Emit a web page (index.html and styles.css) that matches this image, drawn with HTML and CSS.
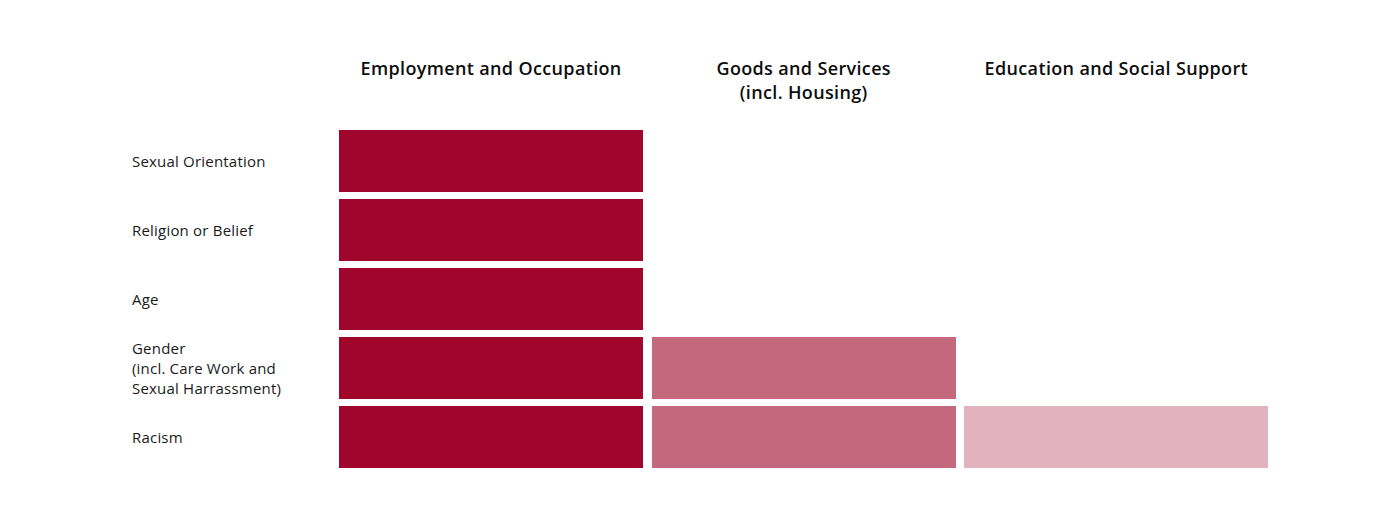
FILE: index.html
```html
<!DOCTYPE html>
<html lang="en">
<head>
<meta charset="utf-8">
<title>Protection Grid</title>
<link rel="stylesheet" href="styles.css">
</head>
<body>
<div class="chart">
  <div class="corner"></div>
  <div class="head">Employment and Occupation</div>
  <div class="head">Goods and Services<br>(incl. Housing)</div>
  <div class="head">Education and Social Support</div>

  <div class="label">Sexual Orientation</div>
  <div class="bar dark"></div>
  <div class="cell"></div>
  <div class="cell"></div>

  <div class="label">Religion or Belief</div>
  <div class="bar dark"></div>
  <div class="cell"></div>
  <div class="cell"></div>

  <div class="label">Age</div>
  <div class="bar dark"></div>
  <div class="cell"></div>
  <div class="cell"></div>

  <div class="label">Gender<br>(incl. Care Work and<br>Sexual Harrassment)</div>
  <div class="bar dark"></div>
  <div class="bar mid"></div>
  <div class="cell"></div>

  <div class="label">Racism</div>
  <div class="bar dark"></div>
  <div class="bar mid"></div>
  <div class="bar light"></div>
</div>
</body>
</html>
```
FILE: styles.css
```css
html, body {
  margin: 0;
  background: #ffffff;
}
body {
  font-family: "Open Sans", "Noto Sans", "Liberation Sans", sans-serif;
  color: #111111;
  font-variant-ligatures: none;
}
.chart {
  display: grid;
  grid-template-columns: 198.7px repeat(3, 304.3px);
  grid-template-rows: 66.5px repeat(5, 61.5px);
  column-gap: 8.3px;
  row-gap: 7.5px;
  padding: 56px 0 0 132px;
}
.head {
  font-size: 18px;
  line-height: 24px;
  font-weight: 600;
  letter-spacing: 0.35px;
  text-align: center;
  color: #0d0d0d;
}
.label {
  display: flex;
  align-items: center;
  padding-top: 1px;
  font-size: 15px;
  line-height: 20px;
  letter-spacing: 0.2px;
  color: #1a1a1a;
}
.dark { background: #a0062b; }
.mid { background: #c4697d; }
.light { background: #e2b3be; }
```
